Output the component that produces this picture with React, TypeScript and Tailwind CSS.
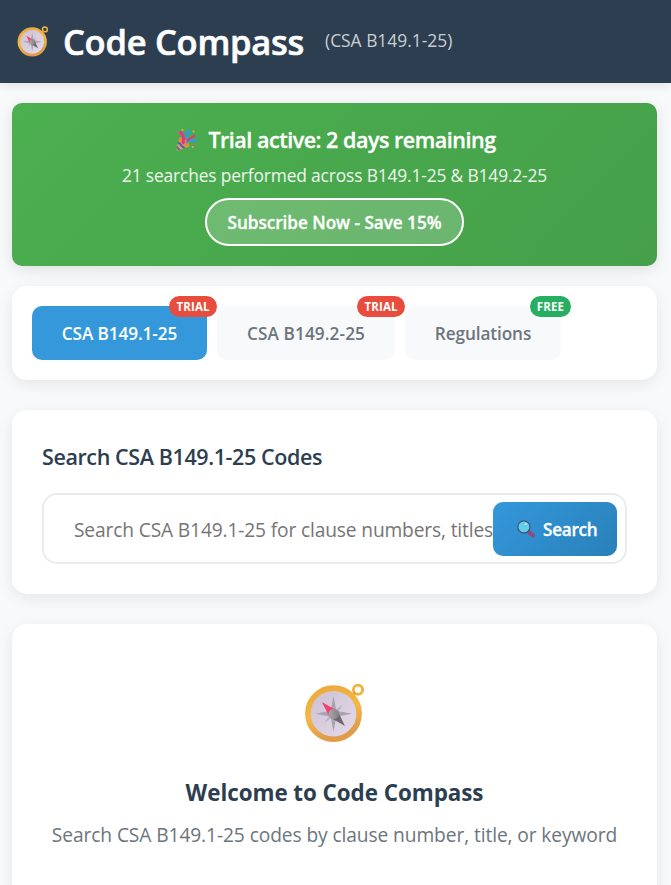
import React from "react";

function Compass({ className, id }: { className: string; id: string }) {
  return (
    <svg viewBox="0 0 60 60" className={className} aria-hidden="true">
      <defs>
        <linearGradient id={`${id}-ring`} x1="0" y1="0" x2="0.3" y2="1">
          <stop offset="0" stopColor="#eba83a" />
          <stop offset="0.55" stopColor="#f2b845" />
          <stop offset="1" stopColor="#e09c48" />
        </linearGradient>
        <linearGradient id={`${id}-face`} x1="0" y1="0" x2="1" y2="1">
          <stop offset="0" stopColor="#cbbfd2" />
          <stop offset="1" stopColor="#e5dcea" />
        </linearGradient>
        <linearGradient id={`${id}-hub`} x1="0" y1="0" x2="1" y2="0">
          <stop offset="0" stopColor="#aaa6ab" />
          <stop offset="1" stopColor="#858287" />
        </linearGradient>
      </defs>
      <circle cx="54" cy="6.7" r="4.6" fill="none" stroke="#efb43c" strokeWidth="2.9" />
      <path d="M48.2 12.6 L51 9.8" stroke="#e0a038" strokeWidth="3" />
      <circle cx="29.5" cy="30.7" r="25.6" fill={`url(#${id}-face)`} stroke={`url(#${id}-ring)`} strokeWidth="5.6" />
      <path d="M38.5 21.7 L33 30.7 L20.5 39.7 L26.5 30.7Z M20.5 21.7 L31.5 28 L38.5 39.7 L27 34Z" fill="#b9b1bd" />
      <path d="M29.5 12.7 L32.3 27.7 L48 30.7 L32.3 33.7 L29.5 49 L26.7 33.7 L11.2 30.7 L26.7 27.7Z" fill="#aaa3af" />
      <path d="M17.7 19 L32.4 27.2 L26 34.4Z" fill="#f4426e" />
      <path d="M41 43 L33.2 27.2 L26.2 34.6Z" fill="#6d6870" />
      <circle cx="29.7" cy="30.9" r="5.2" fill={`url(#${id}-hub)`} />
    </svg>
  );
}

function Party() {
  return (
    <svg viewBox="0 0 22 24" className="h-6 w-[22px] shrink-0" aria-hidden="true">
      <path d="M3.2 10.2 L0.4 21 Q0.4 22.6 2 22.4 L13.2 18.4Z" fill="#f2a03c" />
      <path d="M2.5 13 L9.6 19.8 L7.2 20.7 L1.8 15.6Z M1.1 17.9 L4.6 21.6 L2.6 22.3 L0.5 20.2Z" fill="#4b62cf" />
      <ellipse cx="8.2" cy="14" rx="3" ry="6.4" transform="rotate(-50 8.2 14)" fill="#e58a35" />
      <path d="M7.2 14.6 Q8.6 8 4.6 4.6" fill="none" stroke="#ec2f8f" strokeWidth="3" strokeLinecap="round" />
      <path d="M10.4 14.8 Q13.6 10.4 16.4 12.6 Q18.4 13.6 20.8 11.4" fill="none" stroke="#2b9ce8" strokeWidth="2.2" />
      <path d="M9.2 9.6 Q12.4 8.6 11.4 5.6 Q10.2 4 8.6 6 M11.6 6.4 Q13.8 5.4 13 1.4" fill="none" stroke="#2b9ce8" strokeWidth="2" />
      <path d="M11 12.8 Q12.6 10.6 14.4 10.2 Q16.8 9.8 18.6 7.2" fill="none" stroke="#ec2f8f" strokeWidth="2.2" />
      <rect x="1.4" y="4.2" width="1.7" height="1.7" fill="#ec4fa0" />
      <rect x="16.6" y="2.6" width="1.8" height="1.8" fill="#f4ad40" />
      <rect x="5.6" y="1.2" width="1.7" height="1.7" fill="#f4ad40" />
      <rect x="15.8" y="18" width="1.8" height="1.8" fill="#f4ad40" />
      <rect x="18.4" y="15.6" width="1.7" height="1.7" fill="#ec4fa0" />
    </svg>
  );
}

function Magnifier() {
  return (
    <svg viewBox="0 0 18 18" className="size-[18px] shrink-0" aria-hidden="true">
      <path d="M10.4 10.8 L12.7 13" stroke="#514579" strokeWidth="2" />
      <path d="M12.6 12.8 L15.8 15.4" stroke="#8f4a84" strokeWidth="4.2" strokeLinecap="round" />
      <circle cx="6.9" cy="6.9" r="6.1" fill="#62cfe9" stroke="#46507f" strokeWidth="1.3" />
      <circle cx="8.8" cy="4" r="1.1" fill="#b4edf8" />
    </svg>
  );
}

const card = "rounded-[15px] bg-white shadow-[0_4px_15px_rgba(0,0,0,0.08)]";

function Badge({ children, color }: { children: string; color: string }) {
  return (
    <span className={`absolute -top-[10px] -right-[10px] flex h-[21px] items-center justify-center rounded-full pt-px text-[11.5px] font-bold tracking-[0.15px] whitespace-nowrap text-white ${color}`}>
      {children}
    </span>
  );
}

export default function App() {
  return (
    <div className="h-[885px] overflow-hidden bg-[#f8f9fa] font-['Open_Sans','Noto_Sans',sans-serif] whitespace-nowrap text-[#2c3e50]">
      <header className="flex h-[83px] items-center bg-[#2c3e50] pl-[17px] text-white shadow-[0_2px_10px_rgba(0,0,0,0.1)]">
        <Compass id="logo" className="size-[31px] shrink-0" />
        <h1 className="ml-[15px] w-[262px] text-[34.5px] leading-[48px] font-semibold tracking-[-0.25px] [-webkit-text-stroke:0.6px]">Code Compass</h1>
        <span className="pb-[3px] text-[17.4px] leading-6 text-[#cacfd3]">(CSA B149.1-25)</span>
      </header>

      <main className="px-3 pt-5 pr-[14px]">
        <section className="flex h-[163px] flex-col items-center rounded-[10px] bg-linear-135 from-[#4caf50] to-[#45a049] pt-[22px] text-white shadow-[0_4px_15px_rgba(0,0,0,0.1)]">
          <div className="flex h-[30px] items-center gap-[10px] pl-[3px]">
            <Party />
            <h2 className="text-[21.5px] font-semibold tracking-[-0.48px] [-webkit-text-stroke:0.3px]">Trial active: 2 days remaining</h2>
          </div>
          <p className="mt-2 h-6 text-[17.4px] leading-6 tracking-[-0.16px] text-white/90">21 searches performed across B149.1-25 &amp; B149.2-25</p>
          <button className="mt-[11px] h-12 w-[259px] rounded-full border-2 border-white bg-white/20 pt-[2px] text-[17.2px] font-semibold tracking-[-0.05px] [-webkit-text-stroke:0.3px]">Subscribe Now - Save 15%</button>
        </section>

        <nav className={`mt-5 flex h-[94px] gap-[10px] p-5 ${card}`}>
          <button className="relative h-[54px] w-[175px] rounded-[10px] bg-[#3498db] pt-[2px] text-[17.2px] font-semibold tracking-[-0.1px] text-white">
            CSA B149.1-25
            <Badge color="w-12 bg-[#e74c3c]">TRIAL</Badge>
          </button>
          <button className="relative h-[54px] w-[178px] rounded-[10px] bg-[#f8f9fa] pt-[2px] text-[17.2px] font-semibold tracking-[0.1px] text-[#6c757d]">
            CSA B149.2-25
            <Badge color="w-12 bg-[#e74c3c]">TRIAL</Badge>
          </button>
          <button className="relative h-[54px] w-[156px] rounded-[10px] bg-[#f8f9fa] pt-[2px] text-[17.2px] font-semibold tracking-[-0.1px] text-[#6c757d]">
            Regulations
            <Badge color="w-[41px] bg-[#27ae60]">FREE</Badge>
          </button>
        </nav>

        <section className={`mt-[30px] h-[184px] px-[30px] pt-8 ${card}`}>
          <h2 className="h-[30px] text-[21.5px] leading-[30px] font-semibold tracking-[-0.4px]">Search CSA B149.1-25 Codes</h2>
          <div className="mt-[21px] flex h-[71px] items-center rounded-[15px] border-2 border-[#e9ecef] pr-2 pl-[30px]">
            <div className="w-[419px] shrink-0 overflow-hidden pt-[3px] text-[19.2px] tracking-[-0.15px] text-[#757575]">Search CSA B149.1-25 for clause numbers, titles</div>
            <button className="flex h-[54px] w-[124px] shrink-0 items-center gap-2 rounded-[10px] bg-linear-135 from-[#3498db] to-[#2980b9] pl-6 text-[17.2px] font-semibold tracking-[-0.3px] text-white [-webkit-text-stroke:0.3px]">
              <Magnifier />
              <span className="pt-[2px]">Search</span>
            </button>
          </div>
        </section>

        <section className={`mt-[30px] flex h-[291px] flex-col items-center pt-[59px] ${card}`}>
          <Compass id="hero" className="mr-[2px] size-[60px] shrink-0" />
          <h2 className="mt-[34px] h-8 text-[22.4px] leading-8 font-bold tracking-[-0.05px]">Welcome to Code Compass</h2>
          <p className="mt-[11px] text-[19.2px] leading-[30px] tracking-[-0.1px] text-[#6c757d]">Search CSA B149.1-25 codes by clause number, title, or keyword</p>
        </section>
      </main>
    </div>
  );
}
